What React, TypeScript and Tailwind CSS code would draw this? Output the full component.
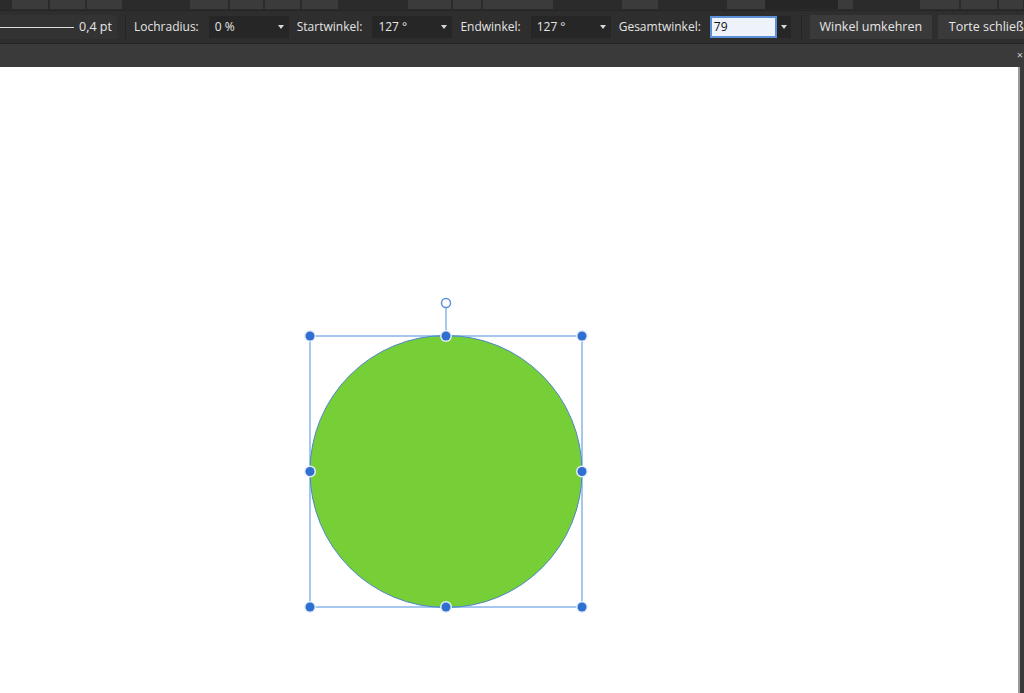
import React from 'react'

function Caret() {
  return <span className="inline-block w-0 h-0 border-l-[3.5px] border-r-[3.5px] border-t-[4px] border-l-transparent border-r-transparent border-t-[#d8d8d8]" />
}

function Dropdown({ value }: { value: string }) {
  return (
    <div className="w-[80px] h-[22px] shrink-0 bg-[#262626] flex items-center justify-between pl-[6px] pr-[5px] text-[#e6e6e6]">
      <span>{value}</span>
      <Caret />
    </div>
  )
}

function Label({ children, className = '' }: { children: React.ReactNode; className?: string }) {
  return <span className={`shrink-0 whitespace-nowrap text-[#e4e4e4] ${className}`}>{children}</span>
}

function TopStrip() {
  return (
    <div className="h-[10px] bg-[#2b2b2b] flex items-start">
      <div className="ml-[12px] flex gap-[2px]">
        <div className="w-[36px] h-[9px] bg-[#3b3b3b]" />
        <div className="w-[35px] h-[9px] bg-[#3b3b3b]" />
        <div className="w-[35px] h-[9px] bg-[#3b3b3b]" />
      </div>
      <div className="ml-[68px] flex gap-[2px]">
        <div className="w-[38px] h-[9px] bg-[#3b3b3b]" />
        <div className="w-[33px] h-[9px] bg-[#3b3b3b]" />
        <div className="w-[35px] h-[9px] bg-[#3b3b3b]" />
        <div className="w-[36px] h-[9px] bg-[#3b3b3b]" />
      </div>
      <div className="ml-[70px] flex gap-[2px]">
        <div className="w-[43px] h-[9px] bg-[#3b3b3b]" />
        <div className="w-[28px] h-[9px] bg-[#3b3b3b]" />
        <div className="w-[35px] h-[9px] bg-[#3b3b3b]" />
      </div>
      <div className="ml-[0px] flex">
        <div className="w-[35px] h-[9px] bg-[#3b3b3b]" />
      </div>
      <div className="ml-[69px] flex">
        <div className="w-[36px] h-[9px] bg-[#3b3b3b]" />
      </div>
      <div className="ml-[69px] flex">
        <div className="w-[38px] h-[9px] bg-[#3b3b3b]" />
        <div className="w-[73px] h-[9px] bg-[#262626]" />
        <div className="w-[15px] h-[9px] bg-[#3b3b3b]" />
      </div>
      <div className="ml-[67px] flex gap-[2px]">
        <div className="w-[39px] h-[9px] bg-[#3b3b3b]" />
        <div className="w-[36px] h-[9px] bg-[#3b3b3b]" />
        <div className="w-[24px] h-[9px] bg-[#3b3b3b]" />
      </div>
    </div>
  )
}

function Toolbar() {
  return (
    <div className="h-[33px] bg-[#2e2e2e] border-t border-[#252525] flex items-center text-[12px] overflow-hidden">
      <div className="w-[117px] h-[24px] shrink-0 bg-[#333333] flex items-center">
        <div className="w-[74px] h-[1px] shrink-0 bg-[#dcdcdc]" />
        <span className="ml-[5px] whitespace-nowrap text-[#e6e6e6] text-[12.5px]">0,4 pt</span>
      </div>
      <div className="ml-[8px] w-[1px] h-[24px] shrink-0 bg-[#242424]" />
      <Label className="ml-[8px]">Lochradius:</Label>
      <div className="ml-[10px]"><Dropdown value="0 %" /></div>
      <Label className="ml-[8px]">Startwinkel:</Label>
      <div className="ml-[10px]"><Dropdown value="127 °" /></div>
      <Label className="ml-[8px]">Endwinkel:</Label>
      <div className="ml-[10px]"><Dropdown value="127 °" /></div>
      <Label className="ml-[8px]">Gesamtwinkel:</Label>
      <div className="ml-[9px] shrink-0 flex items-center h-[22px] bg-[#262626]">
        <div className="w-[67px] h-[22px] bg-[#eef3fb] border-2 border-[#5b8fd8] flex items-center pl-[2px] text-[#111111]">79</div>
        <div className="w-[14px] flex justify-center"><Caret /></div>
      </div>
      <div className="ml-[10px] w-[1px] h-[24px] shrink-0 bg-[#242424]" />
      <div className="ml-[8px] h-[24px] w-[122px] shrink-0 bg-[#3a3a3a] flex items-center justify-center whitespace-nowrap text-[#e6e6e6] text-[12.5px]">Winkel umkehren</div>
      <div className="ml-[6px] h-[24px] pl-[11px] w-[120px] shrink-0 bg-[#3a3a3a] flex items-center text-[#e6e6e6] whitespace-nowrap text-[12.5px]">Torte schließen</div>
    </div>
  )
}

function Handle({ cx, cy }: { cx: number; cy: number }) {
  return (
    <g>
      <circle cx={cx} cy={cy} r={6} fill="#e3ecf9" />
      <circle cx={cx} cy={cy} r={4.5} fill="#2f6fd1" />
    </g>
  )
}

function Shape() {
  // canvas origin is at y=67 in the page
  const left = 310
  const right = 582
  const top = 336 - 67
  const bottom = 607 - 67
  const cx = 446
  const cy = (top + bottom) / 2
  return (
    <svg width="1018" height="626" className="block">
      <circle cx={cx} cy={cy} r={136} fill="#77cf37" stroke="#4f86c9" strokeWidth={1} />
      <rect x={left} y={top} width={right - left} height={bottom - top} fill="none" stroke="#4a8ee0" strokeWidth={1} />
      <line x1={cx} y1={top} x2={cx} y2={top - 30} stroke="#4a8ee0" strokeWidth={1} />
      <circle cx={cx} cy={top - 33} r={4.5} fill="#ffffff" stroke="#5d91d8" strokeWidth={1.5} />
      <Handle cx={left} cy={top} />
      <Handle cx={cx} cy={top} />
      <Handle cx={right} cy={top} />
      <Handle cx={left} cy={cy} />
      <Handle cx={right} cy={cy} />
      <Handle cx={left} cy={bottom} />
      <Handle cx={cx} cy={bottom} />
      <Handle cx={right} cy={bottom} />
    </svg>
  )
}

export default function App() {
  return (
    <div className="w-[1024px] h-[693px] flex flex-col overflow-hidden bg-[#2e2e2e] font-['Open_Sans','Noto_Sans',sans-serif]">
      <TopStrip />
      <Toolbar />
      <div className="h-[24px] bg-[#3a3a3a] border-t border-[#262626] flex items-center justify-end">
        <span className="text-[#cfcfcf] text-[11px] mr-[1px]">×</span>
      </div>
      <div className="flex-1 flex">
        <div className="flex-1 bg-white">
          <Shape />
        </div>
        <div className="w-[2px] bg-[#9a9a9a]" />
        <div className="w-[4px] bg-[#3a3a3a]" />
      </div>
    </div>
  )
}
